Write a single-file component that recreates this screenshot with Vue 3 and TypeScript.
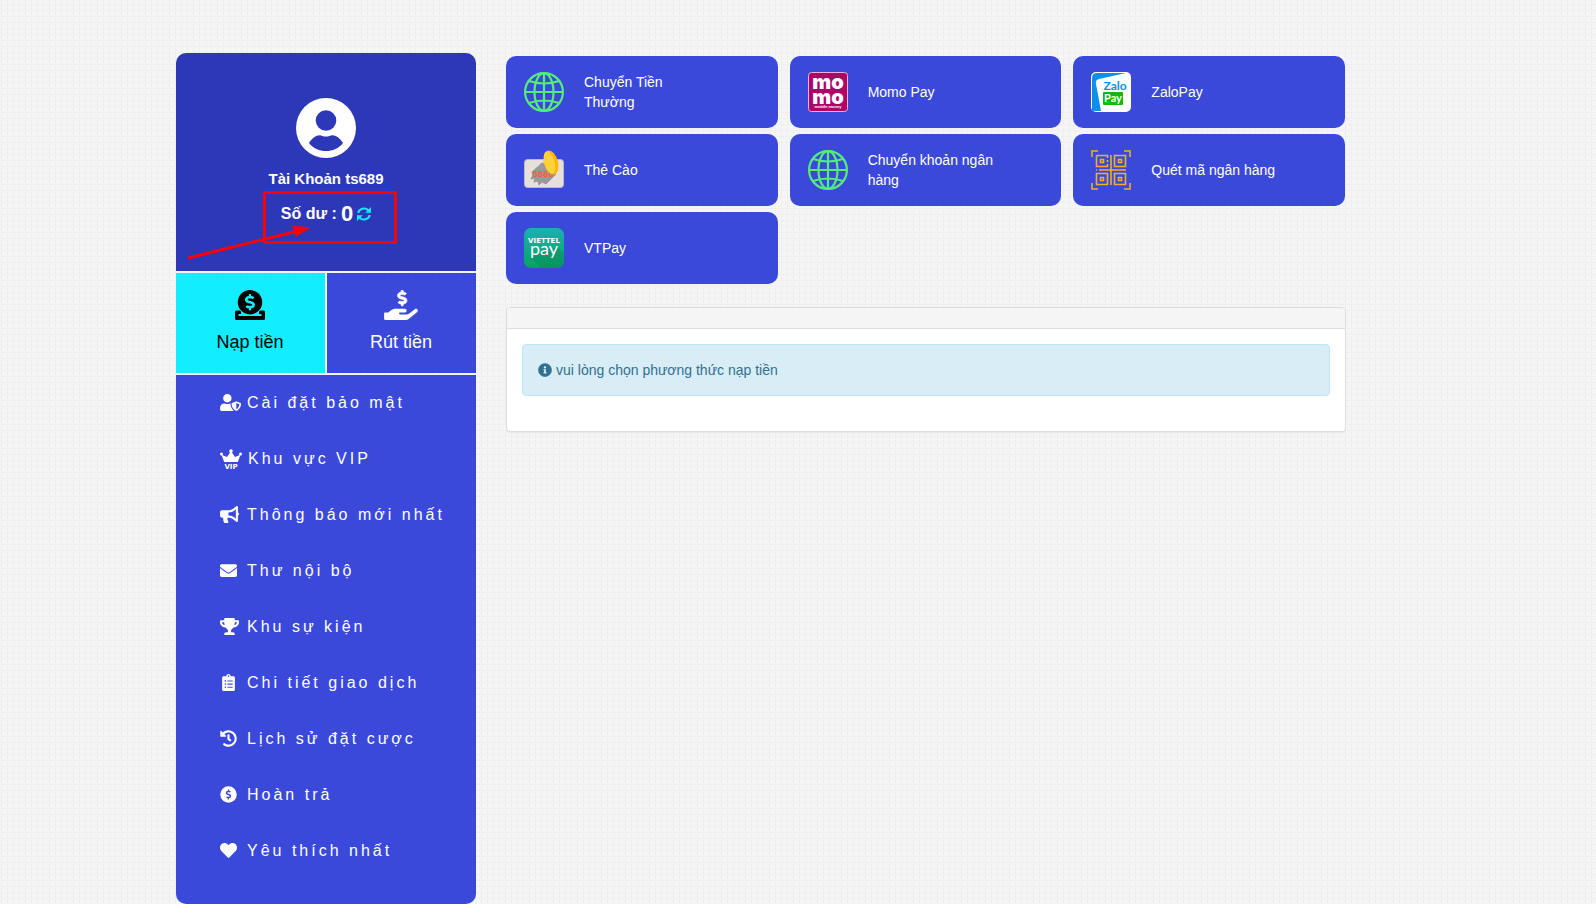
<script setup lang="ts">
import { ref } from 'vue'

interface MenuItem {
  label: string
  icon: string
  box: string
  width: number
  height: number
  path?: string
}

interface Method {
  label: string
  icon: 'globe' | 'momo' | 'zalo' | 'card' | 'qr' | 'viettel'
}

const dollar =
  'M209.2 233.4l-108-31.6C88.7 198.2 80 186.5 80 173.5c0-16.3 13.2-29.5 29.5-29.5h66.3c12.2 0 24.2 3.7 34.2 10.5 6.1 4.1 14.3 3.1 19.5-2l34.8-34c7.1-6.9 6.1-18.4-1.8-24.5C238 74.8 207.4 64.1 176 64V16c0-8.8-7.2-16-16-16h-32c-8.8 0-16 7.2-16 16v48h-2.5C45.8 64-5.4 118.7.5 183.6c4.2 46.1 39.4 83.6 83.8 96.6l102.5 30c12.5 3.7 21.2 15.3 21.2 28.3 0 16.3-13.2 29.5-29.5 29.5h-66.3C100 368 88 364.3 78 357.5c-6.1-4.1-14.3-3.1-19.5 2l-34.8 34c-7.1 6.9-6.1 18.4 1.8 24.5 24.5 19.2 55.1 29.9 86.5 30v48c0 8.8 7.2 16 16 16h32c8.8 0 16-7.2 16-16v-48.2c46.6-.9 90.3-28.6 105.7-72.7 21.5-61.6-14.6-124.8-72.5-141.7z'

const menu: MenuItem[] = [
  {
    label: 'Cài đặt bảo mật', icon: 'shield', box: '0 0 640 512', width: 21, height: 17,
    path: 'M622.3 271.1l-115.2-45c-4.1-1.6-12.6-3.7-22.2 0l-115.2 45c-10.7 4.2-17.7 14-17.7 24.9 0 111.6 68.7 188.8 132.9 213.9 9.6 3.7 18 1.6 22.2 0C558.4 489.9 640 420.5 640 296c0-10.9-7-20.7-17.7-24.9zM496 462.4V273.3l95.5 37.3c-5.6 87.1-60.9 135.4-95.5 151.8zM224 256c70.7 0 128-57.3 128-128S294.7 0 224 0 96 57.3 96 128s57.3 128 128 128zm96 40c0-2.5.8-4.8 1.1-7.2-2.5-.1-4.9-.8-7.5-.8h-16.7c-22.2 10.2-46.9 16-72.9 16s-50.6-5.8-72.9-16h-16.7C60.2 288 0 348.2 0 422.4V464c0 26.5 21.5 48 48 48h352c6.8 0 13.3-1.5 19.2-4-54-42.9-99.2-116.7-99.2-212z',
  },
  { label: 'Khu vực VIP', icon: 'vip', box: '0 0 22 20', width: 22, height: 20 },
  {
    label: 'Thông báo mới nhất', icon: 'horn', box: '0 0 576 512', width: 19, height: 17,
    path: 'M576 240c0-23.63-12.95-44.04-32-55.12V32.01C544 23.26 537.02 0 512 0c-7.12 0-14.19 2.38-19.98 7.02l-85.03 68.03C364.28 109.19 310.66 128 256 128H64c-35.35 0-64 28.65-64 64v96c0 35.35 28.65 64 64 64h33.7c-1.39 10.48-2.18 21.14-2.18 32 0 39.77 9.26 77.35 25.56 110.94 5.19 10.69 16.52 17.06 28.4 17.06h74.28c26.05 0 41.69-29.84 25.9-50.56-16.4-21.52-26.15-48.36-26.15-77.44 0-11.11 1.62-21.79 4.41-32H256c54.66 0 108.28 18.81 150.98 52.95l85.03 68.03a32.023 32.023 0 0 0 19.98 7.02c24.92 0 32-22.78 32-32V295.13C563.05 284.04 576 263.63 576 240zm-96 141.42l-33.05-26.44C392.95 311.78 325.12 288 256 288v-96c69.12 0 136.95-23.78 190.95-66.98L480 98.58v282.84z',
  },
  {
    label: 'Thư nội bộ', icon: 'mail', box: '0 0 512 512', width: 17, height: 17,
    path: 'M502.3 190.8c3.9-3.1 9.7-.2 9.7 4.7V400c0 26.5-21.5 48-48 48H48c-26.5 0-48-21.5-48-48V195.6c0-5 5.7-7.8 9.7-4.7 22.4 17.4 52.1 39.5 154.1 113.6 21.1 15.4 56.7 47.8 92.2 47.6 35.7.3 72-32.8 92.3-47.6 102-74.1 131.6-96.3 154-113.7zM256 320c23.2.4 56.6-29.2 73.4-41.4 132.7-96.3 142.8-104.7 173.4-128.7 5.8-4.5 9.2-11.5 9.2-18.9v-19c0-26.5-21.5-48-48-48H48c-26.5 0-48 21.5-48 48v19c0 7.4 3.4 14.3 9.2 18.9 30.6 23.9 40.7 32.4 173.4 128.7 16.8 12.2 50.2 41.8 73.4 41.4z',
  },
  {
    label: 'Khu sự kiện', icon: 'cup', box: '0 0 576 512', width: 19, height: 17,
    path: 'M552 64H448V24c0-13.3-10.7-24-24-24H152c-13.3 0-24 10.7-24 24v40H24C10.7 64 0 74.7 0 88v56c0 35.7 22.5 72.4 61.9 100.7 31.5 22.7 69.8 37.1 110 41.7C203.3 338.5 240 360 240 360v72h-48c-35.3 0-64 20.7-64 56v12c0 6.6 5.4 12 12 12h296c6.6 0 12-5.4 12-12v-12c0-35.3-28.7-56-64-56h-48v-72s36.7-21.5 68.1-73.6c40.3-4.6 78.6-19 110-41.7 39.3-28.3 61.9-65 61.9-100.7V88c0-13.3-10.7-24-24-24zM99.3 192.8C74.9 175.2 64 155.6 64 144v-16h64.2c1 32.6 5.8 61.2 12.8 86.2-15.1-5.2-29.2-12.4-41.7-21.4zM512 144c0 16.1-17.7 36.1-35.3 48.8-12.5 9-26.7 16.2-41.8 21.4 7-25 11.8-53.6 12.8-86.2H512v16z',
  },
  {
    label: 'Chi tiết giao dịch', icon: 'list', box: '-64 0 512 512', width: 17, height: 17,
    path: 'M336 64h-80c0-35.3-28.7-64-64-64s-64 28.7-64 64H48C21.5 64 0 85.5 0 112v352c0 26.5 21.5 48 48 48h288c26.5 0 48-21.5 48-48V112c0-26.5-21.5-48-48-48zM96 424c-13.3 0-24-10.7-24-24s10.7-24 24-24 24 10.7 24 24-10.7 24-24 24zm0-96c-13.3 0-24-10.7-24-24s10.7-24 24-24 24 10.7 24 24-10.7 24-24 24zm0-96c-13.3 0-24-10.7-24-24s10.7-24 24-24 24 10.7 24 24-10.7 24-24 24zm96-192c13.3 0 24 10.7 24 24s-10.7 24-24 24-24-10.7-24-24 10.7-24 24-24zm128 368c0 4.4-3.6 8-8 8H168c-4.4 0-8-3.6-8-8v-16c0-4.4 3.6-8 8-8h144c4.4 0 8 3.6 8 8v16zm0-96c0 4.4-3.6 8-8 8H168c-4.4 0-8-3.6-8-8v-16c0-4.4 3.6-8 8-8h144c4.4 0 8 3.6 8 8v16zm0-96c0 4.4-3.6 8-8 8H168c-4.4 0-8-3.6-8-8v-16c0-4.4 3.6-8 8-8h144c4.4 0 8 3.6 8 8v16z',
  },
  {
    label: 'Lịch sử đặt cược', icon: 'history', box: '0 0 512 512', width: 17, height: 17,
    path: 'M504 255.531c.253 136.64-111.18 248.372-247.82 248.468-59.015.042-113.223-20.53-155.822-54.911-11.077-8.94-11.905-25.541-1.839-35.607l11.267-11.267c8.609-8.609 22.353-9.551 31.891-1.984C173.062 425.135 212.781 440 256 440c101.705 0 184-82.311 184-184 0-101.705-82.311-184-184-184-48.814 0-93.149 18.969-126.068 49.932l50.754 50.754c10.08 10.08 2.941 27.314-11.313 27.314H24c-8.837 0-16-7.163-16-16V38.627c0-14.254 17.234-21.393 27.314-11.314l49.372 49.372C129.209 34.136 189.552 8 256 8c136.81 0 247.747 110.78 248 247.531zm-180.912 78.784l9.823-12.63c8.138-10.463 6.253-25.542-4.21-33.679L288 256.349V152c0-13.255-10.745-24-24-24h-16c-13.255 0-24 10.745-24 24v135.651l65.409 50.874c10.463 8.137 25.541 6.253 33.679-4.21z',
  },
  { label: 'Hoàn trả', icon: 'coin', box: '0 0 512 512', width: 17, height: 17 },
  {
    label: 'Yêu thích nhất', icon: 'heart', box: '0 0 512 512', width: 17, height: 17,
    path: 'M462.3 62.6C407.5 15.9 326 24.3 275.7 76.2L256 96.5l-19.7-20.3C186.1 24.3 104.5 15.9 49.7 62.6c-62.8 53.6-66.1 149.8-9.9 207.9l193.5 199.8c12.5 12.9 32.8 12.9 45.3 0l193.5-199.8c56.3-58.1 53-154.3-9.8-207.9z',
  },
]

const methods: Method[] = [
  { label: 'Chuyển Tiền Thường', icon: 'globe' },
  { label: 'Momo Pay', icon: 'momo' },
  { label: 'ZaloPay', icon: 'zalo' },
  { label: 'Thẻ Cào', icon: 'card' },
  { label: 'Chuyển khoản ngân hàng', icon: 'globe' },
  { label: 'Quét mã ngân hàng', icon: 'qr' },
  { label: 'VTPay', icon: 'viettel' },
]

const tab = ref<'deposit' | 'withdraw'>('deposit')
const balance = ref(0)
</script>

<template>
  <div class="page">
    <aside class="sidebar">
      <section class="profile">
        <svg class="avatar" viewBox="0 0 60 60" aria-hidden="true">
          <path
            fill="#fff"
            fill-rule="evenodd"
            d="M30 0a30 30 0 1 0 0 60a30 30 0 1 0 0-60ZM30 12.200a10.300 10.300 0 1 1 0 20.600a10.300 10.300 0 1 1 0-20.600ZM13 45C16 40 20 37.200 23.500 37.200C26 37.200 27 38.600 30 38.600C33 38.600 34 37.200 36.500 37.200C40 37.200 44 40 47 45C43 50.500 36.500 53 30 53S17 50.500 13 45Z"
          />
        </svg>
        <p class="account">Tài Khoản ts689</p>
        <p class="balance">
          <span>Số dư :</span>
          <strong>{{ balance }}</strong>
          <button class="refresh" type="button" aria-label="Làm mới" @click="balance = 0">
            <svg viewBox="0 0 14 14">
              <path d="M1.200 6A6 5.500 0 0 1 11.500 3.200M12.800 8A6 5.500 0 0 1 2.500 10.800" fill="none" stroke="#12e9ff" stroke-width="2" />
              <path d="M14 0V5.800H8.200ZM0 14V8.200H5.800Z" fill="#12e9ff" />
            </svg>
          </button>
        </p>
        <svg class="note" viewBox="0 0 216 60" aria-hidden="true">
          <rect x="78.500" y="6.500" width="131" height="50" fill="none" stroke="#f00" stroke-width="3" />
          <path d="M2 72L112 45" stroke="#f00" stroke-width="3" />
          <path d="M125 41L106 40L110 51Z" fill="#f00" />
        </svg>
      </section>

      <nav class="tabs">
        <button type="button" class="tab" :class="{ active: tab === 'deposit' }" @click="tab = 'deposit'">
          <svg viewBox="0 0 30 30" aria-hidden="true">
            <path d="M1.500 20.500H6V24H24V20.500H28.500Q30 20.500 30 22V28.500Q30 30 28.500 30H1.500Q0 30 0 28.500V22Q0 20.500 1.500 20.500Z" fill="currentColor" />
            <path d="M3.500 25H26.500" class="slot" />
            <circle cx="15" cy="12.200" r="13" class="cut" />
            <circle cx="15" cy="12.200" r="12.200" fill="currentColor" />
            <path :d="dollar" class="cut" transform="translate(10 4) scale(.0345 .032)" />
          </svg>
          <span>Nạp tiền</span>
        </button>
        <button type="button" class="tab" :class="{ active: tab === 'withdraw' }" @click="tab = 'withdraw'">
          <svg viewBox="0 0 576 512" aria-hidden="true">
            <path
              fill="currentColor"
              d="M565.300 328.100c-11.800-10.700-30.200-10-42.600 0L430.300 402c-11.300 9.100-25.400 14-40 14H272c-8.800 0-16-7.200-16-16s7.200-16 16-16h78.300c15.900 0 30.700-10.900 33.300-26.600 3.300-20-12.100-37.400-31.600-37.400H192c-27 0-53.100 9.300-74.100 26.300L71.400 384H16c-8.800 0-16 7.200-16 16v96c0 8.800 7.200 16 16 16h356.800c14.500 0 28.600-4.900 40-14L564 377c15.200-12.100 16.400-35.300 1.300-48.900z"
            />
            <path :d="dollar" fill="currentColor" stroke="currentColor" stroke-width="24" transform="translate(228 4) scale(.56 .52)" />
          </svg>
          <span>Rút tiền</span>
        </button>
      </nav>

      <nav class="menu">
        <a v-for="item in menu" :key="item.label" href="#" class="menu-link">
          <span class="menu-icon" :class="{ crown: item.icon === 'vip' }">
            <svg :viewBox="item.box" :width="item.width" :height="item.height" aria-hidden="true">
              <path v-if="item.path" :d="item.path" fill="#fff" />
              <template v-else-if="item.icon === 'coin'">
                <circle cx="256" cy="256" r="248" fill="#fff" />
                <path :d="dollar" fill="#3b49db" transform="translate(175 105) scale(.56 .59)" />
              </template>
              <template v-else>
                <path d="M4.200 13L1.500 5.800L7 8L11 2L15 8L20.500 5.800L17.800 13Z" fill="#fff" />
                <circle cx="1.500" cy="5" r="1.500" fill="#fff" />
                <circle cx="11" cy="2" r="1.800" fill="#fff" />
                <circle cx="20.500" cy="5" r="1.500" fill="#fff" />
                <text x="11" y="20" class="vip-text">VIP</text>
              </template>
            </svg>
          </span>
          <span>{{ item.label }}</span>
        </a>
      </nav>
    </aside>

    <main class="main">
      <div class="methods">
        <button v-for="m in methods" :key="m.label" type="button" class="method">
          <svg viewBox="0 0 40 40" class="method-icon" aria-hidden="true">
            <g v-if="m.icon === 'globe'" fill="none" stroke="#55ed78" stroke-width="2.200">
              <circle cx="20" cy="20" r="18.900" />
              <ellipse cx="20" cy="20" rx="9.500" ry="18.900" />
              <path d="M20 1V39M1 20H39M5 9Q20 14 35 9M5 31Q20 26 35 31" />
            </g>
            <g v-else-if="m.icon === 'momo'">
              <rect x=".5" y=".5" width="39" height="39" rx="3" fill="#ae0468" stroke="#e9b3d0" />
              <text x="20" y="17" class="momo-text">mo</text>
              <text x="20" y="32" class="momo-text">mo</text>
              <text x="20" y="36" class="momo-small">mobile money</text>
            </g>
            <g v-else-if="m.icon === 'zalo'">
              <rect width="40" height="40" rx="5" fill="#fff" />
              <path d="M1 38V6Q1 1 6 1H35L8 7Q4 8 5 12L10 39H3Q1 39 1 38Z" fill="#0a91e5" />
              <text x="24" y="18" class="zalo-text">Zalo</text>
              <rect x="12" y="20" width="20" height="13" rx="1" fill="#12b811" />
              <text x="22" y="30" class="zalo-pay">Pay</text>
            </g>
            <g v-else-if="m.icon === 'card'">
              <rect x=".5" y="9.500" width="39" height="28" rx="3" fill="#e5e0dc" stroke="#b9b9c9" />
              <path d="M8 22L18 13L22 14L32 24L22 34L18 32L15 35L14 31L10 32L11 28L7 29L9 25Z" fill="#999" stroke="#999" stroke-linejoin="round" />
              <text x="19" y="27" class="card-text">8888</text>
              <ellipse cx="27" cy="12.500" rx="7" ry="12.300" transform="rotate(-16 27 12.500)" fill="#ffb800" />
              <ellipse cx="25.500" cy="12.500" rx="5" ry="11.300" transform="rotate(-16 25.500 12.500)" fill="#ffd13b" />
            </g>
            <g v-else-if="m.icon === 'qr'" fill="none" stroke="#f2ae27" stroke-width="1.600">
              <path d="M1 7V1H7M33 1H39V7M39 33V39H33M7 39H1V33" />
              <path d="M5.500 5.500H16.500V8M16.500 10V12M16.500 14V16.500H5.500V5.500M23.500 5.500H34.500V16.500H23.500ZM5.500 23.500H16.500V34.500H5.500ZM23.500 23.500H34.500V34.500H23.500Z" />
              <path d="M9.500 9.500H12.500V12.500H9.500ZM27.500 9.500H30.500V12.500H27.500ZM9.500 27.500H12.500V30.500H9.500ZM27.500 27.500H30.500V30.500H27.500Z" />
              <path d="M20 5V35M8 20H35M5 20H6" />
            </g>
            <g v-else>
              <defs>
                <linearGradient id="viettel" x1="0" y1="0" x2="0" y2="1">
                  <stop offset="0" stop-color="#1bb0b5" />
                  <stop offset="1" stop-color="#07a35c" />
                </linearGradient>
              </defs>
              <rect width="40" height="40" rx="7" fill="url(#viettel)" />
              <path d="M6 29L34 19L40 25V33Q40 40 33 40H17Z" fill="#067d59" opacity=".3" />
              <text x="20" y="15" class="viettel-text">VIETTEL</text>
              <text x="20" y="27" class="viettel-pay">pay</text>
            </g>
          </svg>
          <span class="method-label">{{ m.label }}</span>
        </button>
      </div>

      <section class="panel">
        <div class="panel-heading"></div>
        <div class="panel-body">
          <div class="alert" role="status">
            <svg viewBox="0 0 512 512" aria-hidden="true">
              <path
                fill="currentColor"
                d="M256 8C119.043 8 8 119.083 8 256c0 136.997 111.043 248 248 248s248-111.003 248-248C504 119.083 392.957 8 256 8zm0 110c23.196 0 42 18.804 42 42s-18.804 42-42 42-42-18.804-42-42 18.804-42 42-42zm56 254c0 6.627-5.373 12-12 12h-88c-6.627 0-12-5.373-12-12v-24c0-6.627 5.373-12 12-12h12v-64h-12c-6.627 0-12-5.373-12-12v-24c0-6.627 5.373-12 12-12h64c6.627 0 12 5.373 12 12v100h12c6.627 0 12 5.373 12 12v24z"
              />
            </svg>
            <span>vui lòng chọn phương thức nạp tiền</span>
          </div>
        </div>
      </section>
    </main>
  </div>
</template>

<style>
body {
  margin: 0;
  background: #f5f5f5
    url("data:image/svg+xml,%3Csvg xmlns='http://www.w3.org/2000/svg' width='6' height='6'%3E%3Cpath fill='%23e9e9e9' d='M1 4h1v1H1zM3 4h1v1H3zM5 4h1v1H5zM1 0h1v1H1zM1 2h1v1H1z'/%3E%3C/svg%3E");
}
</style>

<style scoped>
.page {
  display: flex;
  align-items: flex-start;
  gap: 30px;
  padding: 53px 250px 0 176px;
  font-family: "Liberation Sans", Arial, sans-serif;
  font-size: 14px;
  line-height: 20px;
}

button {
  border: 0;
  padding: 0;
  font: inherit;
  cursor: pointer;
}

.sidebar {
  display: flex;
  flex-direction: column;
  gap: 2px;
  flex: 0 0 300px;
  color: #fff;
}

.profile {
  position: relative;
  display: flex;
  flex-direction: column;
  align-items: center;
  padding: 45px 0 42px;
  border-radius: 10px 10px 0 0;
  background: #2d38b8;
}

.avatar {
  width: 60px;
  height: 60px;
}

.account {
  margin: 11px 0 0;
  font-size: 15px;
  font-weight: bold;
}

.balance {
  display: flex;
  align-items: center;
  gap: 4px;
  margin: 10px 0 0;
  font-size: 16px;
  font-weight: bold;
  line-height: 30px;
}

.balance strong {
  font-size: 22px;
}

.refresh {
  display: flex;
  background: none;
}

.refresh svg {
  width: 14px;
  height: 14px;
}

.note {
  position: absolute;
  top: 133px;
  left: 10px;
  width: 216px;
  height: 60px;
  overflow: visible;
  pointer-events: none;
}

.tabs {
  display: grid;
  grid-template-columns: 1fr 1fr;
  gap: 2px;
}

.tab {
  display: flex;
  flex-direction: column;
  align-items: center;
  gap: 10px;
  padding: 17px 1px 19px 0;
  background: #3b49db;
  color: #fff;
  font-size: 18px;
  line-height: 24px;
}

.tab.active {
  background: #12edff;
  color: #000;
}

.tab svg {
  width: 34px;
  height: 30px;
}

.cut {
  fill: #3b49db;
}

.slot {
  stroke: #3b49db;
  stroke-width: 2;
}

.tab.active .cut {
  fill: #12edff;
}

.tab.active .slot {
  stroke: #12edff;
}

.menu {
  padding-bottom: 25px;
  border-radius: 0 0 10px 10px;
  background: #3b49db;
}

.menu-link {
  display: flex;
  align-items: center;
  gap: 6px;
  height: 56px;
  padding-left: 44px;
  color: #fff;
  font-size: 16px;
  letter-spacing: 3px;
  text-decoration: none;
}

.menu-icon {
  display: flex;
  min-width: 21px;
  padding-bottom: 2px;
  letter-spacing: 0;
}

.menu-icon.crown {
  padding-bottom: 0;
}

.vip-text {
  font: bold 7px "DejaVu Sans", sans-serif;
  fill: #fff;
  text-anchor: middle;
}

.main {
  flex: 1;
  min-width: 0;
  padding-top: 3px;
}

.methods {
  display: grid;
  grid-template-columns: repeat(3, 1fr);
  gap: 6px 12px;
  padding-right: 1px;
}

.method {
  display: flex;
  align-items: center;
  gap: 20px;
  height: 72px;
  padding: 0 18px;
  border-radius: 10px;
  background: #3b49db;
  color: #fff;
  text-align: left;
}

.method-icon {
  flex: none;
  width: 40px;
  height: 40px;
  overflow: visible;
}

.method-label {
  max-width: 128px;
}

.momo-text {
  font: 900 20px Inter, sans-serif;
  fill: #fff;
  text-anchor: middle;
}

.momo-small {
  font: bold 4px "Liberation Sans", sans-serif;
  fill: #fff;
  text-anchor: middle;
}

.zalo-text {
  font: bold 12px Lato, sans-serif;
  fill: #0a91e5;
  text-anchor: middle;
}

.zalo-pay {
  font: bold 11px Lato, sans-serif;
  fill: #fff;
  text-anchor: middle;
}

.card-text {
  font: bold 9px "Liberation Mono", monospace;
  fill: #e8673c;
  text-anchor: middle;
}

.viettel-text {
  font: bold 7px "DejaVu Sans", sans-serif;
  fill: #fff;
  text-anchor: middle;
}

.viettel-pay {
  font: 18px Lato, sans-serif;
  fill: #fff;
  text-anchor: middle;
}

.panel {
  margin-top: 23px;
  border: 1px solid #ddd;
  border-radius: 4px;
  background: #fff;
  box-shadow: 0 1px 1px rgba(0, 0, 0, 0.05);
}

.panel-heading {
  height: 20px;
  border-bottom: 1px solid #ddd;
  border-radius: 3px 3px 0 0;
  background: #f5f5f5;
}

.panel-body {
  padding: 15px 15px 35px;
}

.alert {
  display: flex;
  align-items: center;
  gap: 4px;
  padding: 15px;
  border: 1px solid #bce8f1;
  border-radius: 4px;
  background: #d9edf7;
  color: #31708f;
}

.alert svg {
  width: 14px;
  height: 14px;
}
</style>
